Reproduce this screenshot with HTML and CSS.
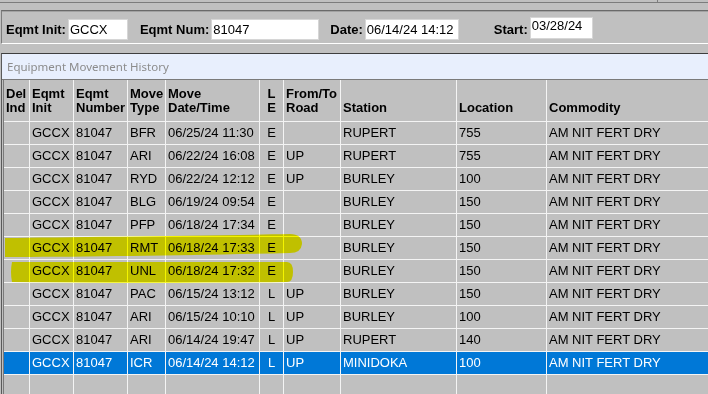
FILE: index.html
```html
<!DOCTYPE html>
<html lang="en">
<head>
  <meta charset="UTF-8" />
  <title>Equipment Movement History</title>
  <link rel="stylesheet" href="styles.css">
</head>
<body>
  <div class="topstrip"><div class="tick"></div></div>

  <div class="toolbar">
    <label class="field">Eqmt Init:<input class="box w-init" type="text" value="GCCX" /></label>
    <label class="field f-num">Eqmt Num:<input class="box w-num" type="text" value="81047" /></label>
    <label class="field f-date">Date:<input class="box w-date" type="text" value="06/14/24 14:12" /></label>
    <label class="field f-start">Start:<input class="box w-start" type="text" value="03/28/24" /></label>
  </div>

  <div class="panel">
    <div class="panel-title">Equipment Movement History</div>
    <div class="grid">
      <div class="row head">
        <div>Del<br/>Ind</div>
        <div>Eqmt<br/>Init</div>
        <div>Eqmt<br/>Number</div>
        <div>Move<br/>Type</div>
        <div>Move<br/>Date/Time</div>
        <div class="c">L<br/>E</div>
        <div>From/To<br/>Road</div>
        <div>Station</div>
        <div>Location</div>
        <div>Commodity</div>
      </div>
      <div id="rows"></div>
      <div class="row empty">
        <div></div><div></div><div></div><div></div><div></div>
        <div></div><div></div><div></div><div></div><div></div>
      </div>
    </div>
  </div>

  <!-- marker strokes someone drew over the screenshot -->
  <svg class="marker" width="708" height="394" viewBox="0 0 708 394">
    <path d="M5,238 C70,237 200,236 290,234 Q302,234 302,244 Q301,253 290,253 C200,255 80,257 5,257 Z" />
    <path d="M12,262 C100,262 200,262 287,262 Q293,262 293,272 Q293,282 287,282 C200,283 100,283 12,282 Q10,272 12,262 Z" />
  </svg>

  <script>
    const moves = [
      ["BFR", "06/25/24 11:30", "E", "", "RUPERT", "755"],
      ["ARI", "06/22/24 16:08", "E", "UP", "RUPERT", "755"],
      ["RYD", "06/22/24 12:12", "E", "UP", "BURLEY", "100"],
      ["BLG", "06/19/24 09:54", "E", "", "BURLEY", "150"],
      ["PFP", "06/18/24 17:34", "E", "", "BURLEY", "150"],
      ["RMT", "06/18/24 17:33", "E", "", "BURLEY", "150"],
      ["UNL", "06/18/24 17:32", "E", "", "BURLEY", "150"],
      ["PAC", "06/15/24 13:12", "L", "UP", "BURLEY", "150"],
      ["ARI", "06/15/24 10:10", "L", "UP", "BURLEY", "100"],
      ["ARI", "06/14/24 19:47", "L", "UP", "RUPERT", "140"],
      ["ICR", "06/14/24 14:12", "L", "UP", "MINIDOKA", "100"]
    ];

    const rows = document.getElementById("rows");
    moves.forEach(function (m, i) {
      const row = document.createElement("div");
      row.className = "row" + (i === moves.length - 1 ? " selected" : "");
      const cells = ["", "GCCX", "81047", m[0], m[1], m[2], m[3], m[4], m[5], "AM NIT FERT DRY"];
      cells.forEach(function (txt, j) {
        const c = document.createElement("div");
        if (j === 5) c.className = "c";
        c.innerText = txt;
        row.appendChild(c);
      });
      rows.appendChild(row);
    });
  </script>
</body>
</html>
```

FILE: styles.css
```css
html, body {
  margin: 0;
  width: 708px;
  height: 394px;
  overflow: hidden;
}
body {
  background: #c0c0c0;
  font-family: "Liberation Sans", Arial, sans-serif;
  font-size: 13px;
  color: #000;
  position: relative;
}

.topstrip {
  height: 10px;
  position: relative;
}
.topstrip::after {
  content: "";
  position: absolute;
  left: 0;
  right: 0;
  top: 2px;
  height: 1px;
  background: #7c7c7c;
}
.tick {
  position: absolute;
  left: 657px;
  top: 0;
  width: 1px;
  height: 3px;
  background: #7c7c7c;
}

.toolbar {
  margin-left: 1px;
  height: 31px;
  border-top: 1px solid #6a6a6a;
  box-shadow: inset 0 1px 0 #a2a2a2;
  padding-top: 1px;
  border-left: 1px solid #7c7c7c;
  border-bottom: 1px solid #fff;
  display: flex;
  align-items: center;
  padding-left: 4px;
}
.field {
  display: flex;
  align-items: center;
  gap: 2px;
  font-weight: bold;
  white-space: nowrap;
  padding-top: 4px;
}
.f-num { margin-left: 12px; }
.f-date { margin-left: 11px; }
.f-start { margin-left: 35px; }
.box {
  box-sizing: border-box;
  height: 21px;
  border: 1px solid #d6d6d6;
  background: #fff;
  font-family: "Liberation Sans", Arial, sans-serif;
  font-size: 13px;
  font-weight: normal;
  color: #000;
  padding: 0 1px;
  margin: 0;
  outline: none;
}
.w-init { width: 60px; }
.w-num { width: 108px; }
.w-date { width: 94px; }
.w-start {
  width: 63px;
  height: 22px;
  margin-top: -4px;
  padding-bottom: 5px;
}

.panel {
  margin-top: 9px;
  margin-left: 1px;
  border-top: 1px solid #3e3e3e;
  border-left: 1px solid #5a5a5a;
}
.panel-title {
  height: 25px;
  line-height: 25px;
  background: #e8effd;
  color: #8c8c8c;
  font-family: "Noto Sans", "Open Sans", sans-serif;
  font-size: 11.5px;
  padding-left: 5px;
  border-bottom: 1px solid #7a7a7a;
}

.grid {
  margin-left: 1px;
  border-left: 1px solid #7a7a7a;
}
.row {
  display: grid;
  grid-template-columns: 26px 44px 54px 38px 94px 24px 57px 116px 90px 1fr;
  height: 23px;
}
.row > div {
  box-sizing: border-box;
  border-right: 1px solid #f4f4f4;
  border-bottom: 1px solid #f4f4f4;
  padding: 0 2px;
  line-height: 22px;
  white-space: nowrap;
  overflow: hidden;
}
.row > div:last-child {
  border-right: none;
}
.row .c {
  text-align: center;
}
.head {
  height: 42px;
  font-weight: bold;
}
.head > div {
  line-height: 14px;
  display: flex;
  flex-direction: column;
  justify-content: flex-end;
  padding-bottom: 6px;
}
.head > div.c {
  align-items: center;
}
.selected {
  background: #0078d7;
  color: #fff;
}
.empty {
  height: 30px;
}

.marker {
  position: absolute;
  left: 0;
  top: 0;
  pointer-events: none;
  mix-blend-mode: multiply;
}
.marker path {
  fill: #ffff00;
}
```
